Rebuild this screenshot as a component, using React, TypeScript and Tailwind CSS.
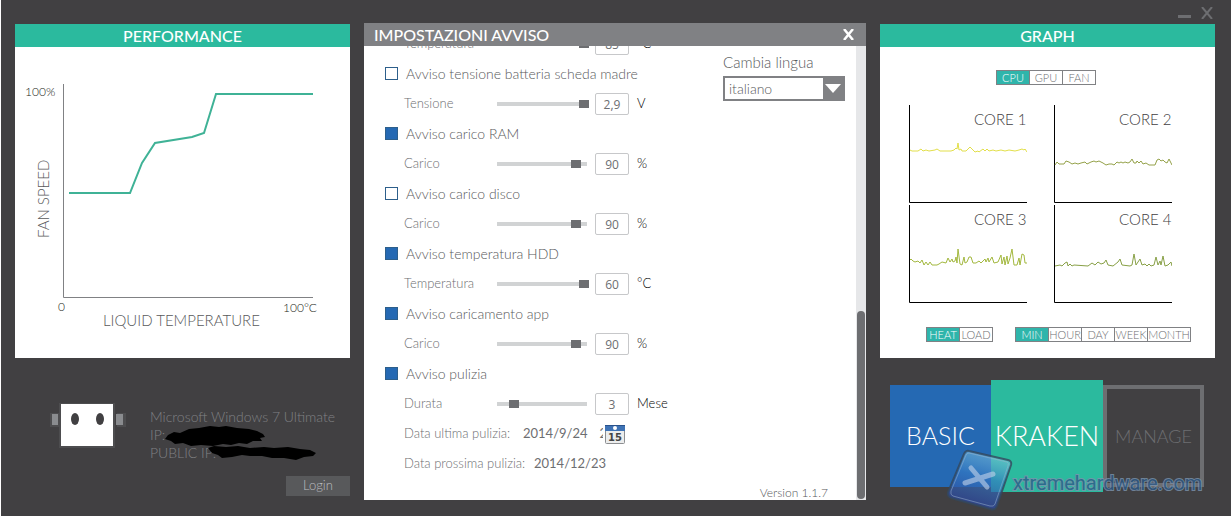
import { useState } from "react";

type Alert = {
  title: string;
  param: string;
  value: string;
  unit: string;
  min: number;
  max: number;
  level: number;
  enabled: boolean;
};

const ALERTS: Alert[] = [
  { title: "Avviso tensione batteria scheda madre", param: "Tensione", value: "2,9", unit: "V", min: 0, max: 100, level: 100, enabled: false },
  { title: "Avviso carico RAM", param: "Carico", value: "90", unit: "%", min: 0, max: 100, level: 90, enabled: true },
  { title: "Avviso carico disco", param: "Carico", value: "90", unit: "%", min: 0, max: 100, level: 90, enabled: false },
  { title: "Avviso temperatura HDD", param: "Temperatura", value: "60", unit: "°C", min: 0, max: 60, level: 60, enabled: true },
  { title: "Avviso caricamento app", param: "Carico", value: "90", unit: "%", min: 0, max: 100, level: 90, enabled: true },
  { title: "Avviso pulizia", param: "Durata", value: "3", unit: "Mese", min: 1, max: 15, level: 3, enabled: true },
];

const CORES = [
  {
    name: "CORE 1",
    color: "#e2df4a",
    points:
      "1,45 3,46 9,46 12,44 14,46 17,45 20,46 26,45 28,44 31,46 42,46 45,45 47,43 48,44 49,38 50,45 52,44 53,46 57,46 59,44 61,42 63,44 64,45 66,47 69,46 70,47 74,44 76,46 78,44 80,46 84,45 87,46 92,45 96,46 100,45 106,46 110,45 113,44 115,45 116,44 118,47",
  },
  {
    name: "CORE 2",
    color: "#94a148",
    points:
      "1,60 3,57 5,59 10,59 12,56 15,57 18,59 21,58 24,59 27,58 31,57 33,59 37,57 40,56 42,57 45,56 49,58 52,60 55,59 58,59 60,60 63,57 65,58 67,57 69,58 71,57 74,58 76,57 78,54 80,58 82,58 83,56 85,58 87,56 89,59 92,58 95,60 101,60 103,55 105,54 107,56 109,55 111,57 113,58 115,54 118,60",
  },
  {
    name: "CORE 3",
    color: "#a3b83f",
    points:
      "1,55 2,54 4,56 6,57 9,56 11,58 13,55 15,60 17,57 19,60 21,57 23,60 28,60 30,59 33,57 37,58 39,53 41,57 43,54 44,57 46,56 47,52 48,58 49,44 51,59 53,60 55,52 56,58 58,57 60,52 62,52 64,58 67,58 70,56 72,58 76,54 77,57 79,53 80,57 83,52 85,58 89,57 92,50 93,59 95,52 96,60 98,51 99,59 101,53 103,44 104,52 105,60 108,60 110,53 111,60 113,49 115,50 116,58 118,58",
  },
  {
    name: "CORE 4",
    color: "#88a046",
    points:
      "1,61 6,60 8,61 11,58 13,57 14,61 16,59 18,61 20,60 34,61 38,58 41,60 44,57 47,59 50,58 52,55 54,60 59,61 64,57 66,54 68,60 76,61 78,60 80,49 82,60 86,54 88,60 91,59 93,61 95,59 97,61 100,60 102,52 104,60 106,56 107,60 109,51 111,61 114,60 117,57 118,61",
  },
];

function PanelTitle({ children }: { children: string }) {
  return (
    <h2 className="flex h-[23px] items-center justify-center bg-[#2bba9e] text-base font-medium text-white">
      {children}
    </h2>
  );
}

function Segments({ items, label, last = "w-8" }: { items: string[]; label: string; last?: string }) {
  const [active, setActive] = useState(items[0]);
  return (
    <div role="group" aria-label={label} className="flex h-[15px] border border-[#808184] text-[11px] leading-3">
      {items.map((item, i) => (
        <button
          key={item}
          type="button"
          onClick={() => setActive(item)}
          className={`${i === items.length - 1 ? last : "w-[33px] border-r border-[#808184]"} ${
            active === item ? "bg-[#2fb5ab] text-white" : "text-[#6d6e71]"
          }`}
        >
          {item}
        </button>
      ))}
    </div>
  );
}

function FanCurve() {
  return (
    <svg viewBox="0 0 335 311" className="block w-full bg-white">
      <path d="M48.500 37V250.500H298" fill="none" stroke="#808184" />
      <path
        d="M54 146H115L127 116L140 96L177 90L189 86L201 47H298"
        fill="none"
        stroke="#3fb296"
        strokeWidth="2"
      />
      <g fill="#231f20" fontSize="12">
        <text x="10" y="49">100%</text>
        <text x="43" y="264">0</text>
        <text x="268" y="265">100°C</text>
      </g>
      <g fill="#58595b" fontSize="15">
        <text x="88" y="279">LIQUID TEMPERATURE</text>
        <text transform="translate(34 191) rotate(-90)">FAN SPEED</text>
      </g>
    </svg>
  );
}

function Robot() {
  return (
    <svg width="76" height="48" viewBox="0 0 76 48" className="shrink-0">
      <path d="M0 11H9V25H0ZM67 11H76V25H67Z" fill="#4d4d4f" />
      <path d="M2 12H8V23H2ZM66 12H73V23H66Z" fill="#8a8c8f" />
      <path d="M9 1H65V46H9Z" fill="#4d4d4f" />
      <path d="M11 2H63V44H11Z" fill="#fff" />
      <ellipse cx="25" cy="17" rx="4" ry="6" fill="#414042" />
      <ellipse cx="50" cy="17" rx="4" ry="6" fill="#414042" />
    </svg>
  );
}

function SliderRow({ alert }: { alert: Omit<Alert, "title" | "enabled"> }) {
  return (
    <div className="flex h-[30px] items-center pl-[19px] text-[13px] text-[#6d6e71]">
      <span className="w-[93px]">{alert.param}</span>
      <input
        type="range"
        aria-label={alert.param}
        min={alert.min}
        max={alert.max}
        defaultValue={alert.level}
        className="h-2 w-[92px] appearance-none bg-[linear-gradient(#d1d3d4,#d1d3d4)] bg-[length:90px_4px] bg-left bg-no-repeat [&::-webkit-slider-thumb]:h-2 [&::-webkit-slider-thumb]:w-2.5 [&::-webkit-slider-thumb]:appearance-none [&::-webkit-slider-thumb]:bg-[#6d6e71]"
      />
      <input
        type="text"
        aria-label={`${alert.param} valore`}
        defaultValue={alert.value}
        className="ml-1.5 h-[22px] w-[34px] rounded-xs border border-[#c7c8ca] text-center font-['Open_Sans',sans-serif] text-xs font-normal text-[#6d6e71]"
      />
      <span className="ml-2 text-black">{alert.unit}</span>
    </div>
  );
}

function CalendarIcon() {
  return (
    <svg width="20" height="20" viewBox="0 0 20 20">
      <rect x="0.500" y="1.500" width="19" height="18" rx="1" fill="#eceded" stroke="#8c8e91" />
      <path d="M0 1H20V7H0Z" fill="#3f73b5" />
      <path d="M0 1H20V2H0Z" fill="#29528c" />
      <circle cx="10" cy="4" r="2" fill="#fff" />
      <text x="10" y="17" textAnchor="middle" fontSize="10" fontWeight="700" fontFamily="DejaVu Sans" fill="#444">
        15
      </text>
    </svg>
  );
}

function SettingsDialog() {
  return (
    <section role="dialog" aria-labelledby="settings-title" className="flex min-w-0 flex-col bg-white">
      <header className="flex h-[23px] shrink-0 items-center justify-between bg-[#808184] pr-3 pl-2.5 text-white">
        <h2 id="settings-title" className="text-base font-medium">IMPOSTAZIONI AVVISO</h2>
        <button type="button" aria-label="Chiudi">
          <svg width="11" height="11" viewBox="0 0 11 11" fill="none" stroke="currentColor" strokeWidth="2.500">
            <path d="M1 0L10 11M10 0L1 11" />
          </svg>
        </button>
      </header>

      <div className="flex flex-1 overflow-hidden">
        <div className="flex min-w-0 flex-1 flex-col">
          <div className="flex justify-between pr-[11px]">
            {/* list is scrolled down, the first row is cut by the header */}
            <div className="-mt-[17px] pl-[21px]">
              <SliderRow alert={{ param: "Temperatura", value: "85", unit: "°C", min: 0, max: 85, level: 85 }} />
              {ALERTS.map((alert) => (
                <div key={alert.title}>
                  <label className="flex h-[30px] items-center gap-2 pb-px text-sm text-[#58595b]">
                    <input
                      type="checkbox"
                      defaultChecked={alert.enabled}
                      className="size-[13px] appearance-none border border-[#2d5f8b] bg-white checked:bg-[#2569b3]"
                    />
                    {alert.title}
                  </label>
                  <SliderRow alert={alert} />
                </div>
              ))}
              <div className="flex h-[30px] items-center pl-[19px] text-[13px] text-[#6d6e71]">
                <span className="w-[119px]">Data ultima pulizia:</span>
                <time className="flex w-20 gap-3 overflow-hidden font-normal">
                  <span>2014/9/24</span>
                  <span>2</span>
                </time>
                <button type="button" aria-label="Scegli data" className="ml-0.5">
                  <CalendarIcon />
                </button>
              </div>
              <div className="flex h-[30px] items-center pl-[19px] text-[13px] text-[#6d6e71]">
                <span className="w-[130px]">Data prossima pulizia:</span>
                <time className="font-normal">2014/12/23</time>
              </div>
            </div>

            <div className="flex w-[122px] flex-col gap-1 pt-1.5 text-[15px] text-[#58595b]">
              <label htmlFor="language" className="leading-5">Cambia lingua</label>
              <div className="grid h-[25px] grid-cols-[1fr_20px] items-center border-2 border-[#808184] bg-[#808184]">
                <select id="language" className="h-full appearance-none bg-white pl-1 text-sm leading-5">
                  <option>italiano</option>
                  <option>english</option>
                </select>
                <svg width="16" height="9" viewBox="0 0 16 9" className="pointer-events-none justify-self-center">
                  <path d="M0 0H16L8 9Z" fill="#fff" />
                </svg>
              </div>
            </div>
          </div>
          <p className="mt-auto pr-7 text-right text-xs leading-[14px] text-[#58595b]">Version 1.1.7</p>
        </div>

        <div className="flex w-2.5 flex-col justify-end bg-[#e6e7e9] p-px">
          <div className="h-[188px] rounded-full bg-[#6d6e71]" />
        </div>
      </div>
    </section>
  );
}

function Watermark() {
  return (
    <svg
      width="256"
      height="64"
      viewBox="0 0 256 64"
      className="pointer-events-none absolute top-[69px] left-[57px]"
    >
      <defs>
        <linearGradient id="tile" x1="0.700" y1="0" x2="0.400" y2="1">
          <stop offset="0" stopColor="#8fd6e6" stopOpacity="0.500" />
          <stop offset="0.450" stopColor="#3479c4" stopOpacity="0.650" />
          <stop offset="1" stopColor="#2a3c93" stopOpacity="0.800" />
        </linearGradient>
      </defs>
      <path
        d="M22 2L61 11Q65 12 64 16L50 57Q48 62 43 60L4 49Q0 47 1 43L17 5Q19 1 22 2Z"
        fill="url(#tile)"
        stroke="#33475c"
        strokeWidth="2"
        strokeOpacity="0.800"
      />
      <path
        d="M22 4L60 13Q62 14 61 17L48 55Q47 58 43 57L6 47Q3 46 4 42L19 6Q20 4 22 4Z"
        fill="none"
        stroke="#9bb5cf"
        strokeOpacity="0.500"
      />
      <path d="M24 19L40 38M46 25L18 34" stroke="#c3d3ea" strokeWidth="5" strokeLinecap="round" opacity="0.600" />
      <text
        x="66"
        y="41"
        fontSize="20"
        fontWeight="400"
        fontFamily="Roboto"
        fill="#2c5a88"
        stroke="#7b93ad"
        strokeWidth="2"
        paintOrder="stroke"
        opacity="0.800"
      >
        xtremehardware.com
      </text>
    </svg>
  );
}

export default function App() {
  return (
    <div className="flex min-h-screen flex-col border-l border-white bg-[#414042] pr-4 pb-4 pl-3.5 font-['Lato',sans-serif] font-light">
      <div className="flex h-[23px] items-end justify-end gap-2.5 pr-0.5 pb-1 text-[#6d6e71]">
        <button type="button" aria-label="Riduci">
          <svg width="13" height="12" viewBox="0 0 13 12">
            <path d="M0 8H13V11H0Z" fill="currentColor" />
          </svg>
        </button>
        <button type="button" aria-label="Esci">
          <svg width="12" height="12" viewBox="0 0 12 12" fill="none" stroke="currentColor" strokeWidth="2">
            <path d="M1 0L11 12M11 0L1 12" />
          </svg>
        </button>
      </div>

      <main className="grid flex-1 grid-cols-[335px_minmax(0,1fr)_335px] gap-3.5">
        <div className="flex flex-col pt-px">
          <PanelTitle>PERFORMANCE</PanelTitle>
          <FanCurve />
          <div className="mt-11 flex gap-6 pl-[35px] text-sm leading-[18px] text-[#808184]">
            <Robot />
            <div className="pt-1.5">
              <p>Microsoft Windows 7 Ultimate</p>
              <p className="flex">
                IP:
                <svg width="100" height="20" viewBox="0 0 100 20" className="-mb-0.5">
                  <path
                    d="M0 13L3 9L9 6L15 7L24 3L34 2L45 0L54 1L61 0L72 2L84 3L92 5L98 8L100 11L95 12L97 15L88 15L82 18L74 17L66 19L58 18L48 20L36 19L26 20L18 17L10 18L6 15Z"
                    fill="#000"
                  />
                </svg>
              </p>
              <p className="flex">
                PUBLIC IP:
                <svg width="108" height="16" viewBox="0 0 108 16" className="-ml-2">
                  <path
                    d="M0 4L6 2L18 3L30 2L42 4L56 3L66 4L80 3L92 5L102 6L108 9L105 12L96 13L88 16L76 14L64 14L54 12L42 12L34 11L24 13L14 14L10 11L4 9Z"
                    fill="#000"
                  />
                </svg>
              </p>
            </div>
          </div>
          <button type="button" className="mt-auto mb-1 h-5 w-16 self-end bg-[#58595b] text-[13px] text-[#bcbec0]">
            Login
          </button>
        </div>

        <SettingsDialog />

        <div className="flex flex-col pt-px">
          <PanelTitle>GRAPH</PanelTitle>
          <div className="flex flex-col items-center bg-white pt-[23px] pr-[3px] pb-4">
            <Segments label="Sensore" items={["CPU", "GPU", "FAN"]} />
            <div className="mt-5 mr-3 grid grid-cols-2 gap-x-[27px] gap-y-0.5">
              {CORES.map((core) => (
                <figure key={core.name} className="grid">
                  <svg width="118" height="98" viewBox="0 0 118 98" className="col-start-1 row-start-1">
                    <path d="M0.500 0V97.500H118" fill="none" stroke="#000" />
                    <polyline points={core.points} fill="none" stroke={core.color} />
                  </svg>
                  <figcaption className="col-start-1 row-start-1 pt-1 text-right text-[15px] leading-5 text-[#414042]">
                    {core.name}
                  </figcaption>
                </figure>
              ))}
            </div>
            <div className="mt-6 flex w-full justify-end gap-[22px] pr-[21px]">
              <Segments label="Misura" items={["HEAT", "LOAD"]} />
              <Segments label="Periodo" items={["MIN", "HOUR", "DAY", "WEEK", "MONTH"]} last="w-[42px]" />
            </div>
          </div>

          <div className="relative mt-[22px] ml-2.5 flex items-center">
            <button type="button" className="h-[102px] w-[101px] bg-[#2569b3] text-[25px] text-white">BASIC</button>
            <button type="button" className="size-28 bg-[#2bba9e] text-[27px] text-white">KRAKEN</button>
            <button type="button" className="h-[102px] w-[101px] border-4 border-[#6d6e71] text-lg text-[#6d6e71]">
              MANAGE
            </button>
            <Watermark />
          </div>
        </div>
      </main>
    </div>
  );
}
